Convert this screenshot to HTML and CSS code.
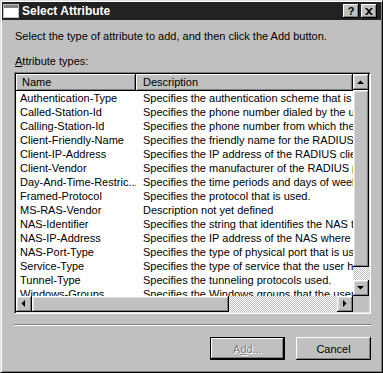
FILE: index.html
```html
<!DOCTYPE html>
<html lang="en">
<head>
  <meta charset="UTF-8">
  <title>Select Attribute</title>
  <link rel="stylesheet" href="styles.css">
</head>
<body>
  <div class="dialog">
    <div class="titlebar">
      <svg class="appicon" width="16" height="16" viewBox="0 0 16 16">
        <rect x="0.5" y="1.5" width="15" height="13" fill="#fff" stroke="#c0c0c0"/>
        <rect x="1" y="2" width="14" height="3" fill="#808080"/>
        <rect x="1" y="5" width="14" height="9" fill="#fff"/>
      </svg>
      <div class="title">Select Attribute</div>
      <div class="tbtn">?</div>
      <div class="tbtn close">
        <svg width="8" height="7" viewBox="0 0 8 7"><path d="M0 0h2l2 2 2-2h2L5 3.5 8 7H6L4 5 2 7H0l3-3.5z" fill="#000"/></svg>
      </div>
    </div>

    <div class="content">
      <p class="intro">Select the type of attribute to add, and then click the Add button.</p>
      <div class="label"><u>A</u>ttribute types:</div>

      <div class="listview">
        <div class="lv-body">
          <div class="lv-header">
            <div class="hcell hname">Name</div>
            <div class="hcell hdesc">Description</div>
          </div>
          <div class="row"><div class="cname">Authentication-Type</div><div class="cdesc">Specifies the authentication scheme that is used to verify the user</div></div>
          <div class="row"><div class="cname">Called-Station-Id</div><div class="cdesc">Specifies the phone number dialed by the user</div></div>
          <div class="row"><div class="cname">Calling-Station-Id</div><div class="cdesc">Specifies the phone number from which the call originated</div></div>
          <div class="row"><div class="cname">Client-Friendly-Name</div><div class="cdesc">Specifies the friendly name for the RADIUS client</div></div>
          <div class="row"><div class="cname">Client-IP-Address</div><div class="cdesc">Specifies the IP address of the RADIUS client</div></div>
          <div class="row"><div class="cname">Client-Vendor</div><div class="cdesc">Specifies the manufacturer of the RADIUS proxy or NAS</div></div>
          <div class="row"><div class="cname">Day-And-Time-Restric...</div><div class="cdesc">Specifies the time periods and days of week during which</div></div>
          <div class="row"><div class="cname">Framed-Protocol</div><div class="cdesc">Specifies the protocol that is used.</div></div>
          <div class="row"><div class="cname">MS-RAS-Vendor</div><div class="cdesc">Description not yet defined</div></div>
          <div class="row"><div class="cname">NAS-Identifier</div><div class="cdesc">Specifies the string that identifies the NAS that originated</div></div>
          <div class="row"><div class="cname">NAS-IP-Address</div><div class="cdesc">Specifies the IP address of the NAS where the request</div></div>
          <div class="row"><div class="cname">NAS-Port-Type</div><div class="cdesc">Specifies the type of physical port that is used by the NAS</div></div>
          <div class="row"><div class="cname">Service-Type</div><div class="cdesc">Specifies the type of service that the user has requested</div></div>
          <div class="row"><div class="cname">Tunnel-Type</div><div class="cdesc">Specifies the tunneling protocols used.</div></div>
          <div class="row"><div class="cname">Windows-Groups</div><div class="cdesc">Specifies the Windows groups that the user belongs to</div></div>
        </div>

        <div class="vscroll">
          <div class="sbtn"><svg width="16" height="16" viewBox="0 0 16 16"><path d="M4 10h7L7.5 6.5z" fill="#000"/></svg></div>
          <div class="thumb vthumb"></div>
          <div class="track"></div>
          <div class="sbtn"><svg width="16" height="16" viewBox="0 0 16 16"><path d="M4 6h7L7.5 9.5z" fill="#000"/></svg></div>
        </div>

        <div class="hscroll">
          <div class="sbtn"><svg width="16" height="16" viewBox="0 0 16 16"><path d="M9 4v7L5.5 7.5z" fill="#000"/></svg></div>
          <div class="thumb hthumb"></div>
          <div class="track"></div>
          <div class="sbtn"><svg width="16" height="16" viewBox="0 0 16 16"><path d="M6 4v7L9.5 7.5z" fill="#000"/></svg></div>
        </div>
        <div class="corner"></div>
      </div>

      <div class="sep"></div>

      <div class="buttons">
        <button class="btn default" disabled>A<u>d</u>d...</button>
        <button class="btn">Cancel</button>
      </div>
    </div>
  </div>
</body>
</html>
```

FILE: styles.css
```css
* { margin: 0; padding: 0; box-sizing: border-box; }
body {
  width: 383px;
  height: 373px;
  overflow: hidden;
  background: #c0c0c0;
  font-family: "Liberation Sans", Arial, sans-serif;
  font-size: 11px;
  color: #000;
}
.dialog {
  width: 383px;
  height: 373px;
  display: flex;
  flex-direction: column;
  padding: 1px;
  background: #c0c0c0;
  border: 1px solid;
  border-color: #dfdfdf #000 #000 #dfdfdf;
  box-shadow: inset 1px 1px #fff, inset -1px -1px #808080;
}
.titlebar {
  height: 18px;
  display: flex;
  align-items: center;
  padding: 0 4px 0 1px;
  background: #222;
  color: #fff;
}
.appicon { display: block; }
.title {
  flex: 1;
  margin-left: 3px;
  font-weight: bold;
  font-size: 12px;
}
.tbtn {
  width: 16px;
  height: 14px;
  display: flex;
  align-items: center;
  justify-content: center;
  background: #c0c0c0;
  color: #000;
  font-weight: bold;
  font-size: 11px;
  box-shadow: inset -1px -1px #000, inset 1px 1px #fff, inset -2px -2px #808080;
}
.tbtn.close { margin-left: 2px; }

.content {
  flex: 1;
  padding: 10px 10px 0 12px;
}
.intro { line-height: 13px; margin-left: 1px; }
.label { line-height: 13px; margin: 12px 0 0 1px; }

.listview {
  height: 242px;
  margin-top: 4px;
  display: grid;
  grid-template-columns: 337px 16px;
  grid-template-rows: 222px 16px;
  padding: 1px;
  border: 1px solid;
  border-color: #808080 #fff #fff #808080;
  box-shadow: inset 1px 1px #000, inset -1px -1px #dfdfdf;
}
.lv-body {
  overflow: hidden;
  background: #fff;
}
.lv-header { display: flex; height: 17px; }
.hcell {
  height: 17px;
  line-height: 16px;
  background: #c0c0c0;
  box-shadow: inset -1px -1px #000, inset 1px 1px #fff, inset -2px -2px #808080;
}
.hname { width: 120px; padding-left: 6px; }
.hdesc { width: 217px; padding-left: 7px; }
.row {
  display: flex;
  height: 14px;
  line-height: 14px;
  white-space: nowrap;
}
.cname { width: 120px; flex: none; padding-left: 4px; overflow: hidden; }
.cdesc { flex: none; padding-left: 7px; }

.vscroll { display: flex; flex-direction: column; }
.hscroll { display: flex; }
.sbtn, .thumb {
  width: 16px;
  height: 16px;
  flex: none;
  background: #c0c0c0;
  box-shadow: inset -1px -1px #000, inset 1px 1px #fff, inset -2px -2px #808080, inset 2px 2px #dfdfdf;
}
.sbtn svg { display: block; }
.vthumb { height: 177px; }
.hthumb { width: 197px; }
.track {
  flex: 1;
  background: repeating-conic-gradient(#fff 0 25%, #c0c0c0 0 50%) 0 0 / 2px 2px;
}
.corner { background: #c0c0c0; }

.sep {
  height: 2px;
  margin-top: 10px;
  border-top: 1px solid #808080;
  border-bottom: 1px solid #fff;
}
.buttons {
  display: flex;
  justify-content: flex-end;
  gap: 11px;
  margin-top: 11px;
}
.btn {
  width: 75px;
  height: 23px;
  font-family: "Liberation Sans", Arial, sans-serif;
  font-size: 11px;
  color: #000;
  background: #c0c0c0;
  border: none;
  box-shadow: inset -1px -1px #000, inset 1px 1px #fff, inset -2px -2px #808080;
}
.btn.default {
  border: 1px solid #000;
  color: #808080;
  text-shadow: 1px 1px #fff;
}
```
